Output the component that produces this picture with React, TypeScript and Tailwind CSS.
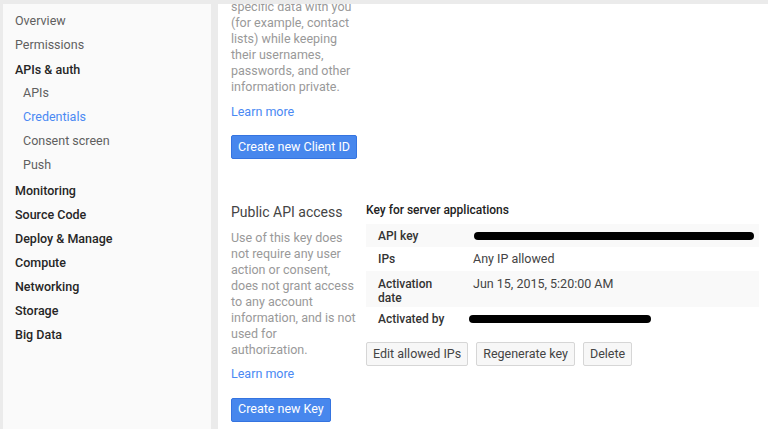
import React from "react";

type NavKind = "top" | "sub" | "group" | "active";

const navItems: { label: string; kind: NavKind; extra?: string }[] = [
  { label: "Overview", kind: "top" },
  { label: "Permissions", kind: "top" },
  { label: "APIs & auth", kind: "group", extra: "mt-[2px] h-[22px]" },
  { label: "APIs", kind: "sub" },
  { label: "Credentials", kind: "active" },
  { label: "Consent screen", kind: "sub" },
  { label: "Push", kind: "sub" },
  { label: "Monitoring", kind: "group", extra: "mt-[2px]" },
  { label: "Source Code", kind: "group" },
  { label: "Deploy & Manage", kind: "group" },
  { label: "Compute", kind: "group" },
  { label: "Networking", kind: "group" },
  { label: "Storage", kind: "group" },
  { label: "Big Data", kind: "group" },
];

const kindCls: Record<NavKind, string> = {
  top: "pl-[12px] text-[#5f5f5f]",
  group: "pl-[12px] text-[#262626] font-medium",
  sub: "pl-[20px] text-[#5f5f5f]",
  active: "pl-[20px] text-[#4a89f3]",
};

function Sidebar() {
  return (
    <aside className="w-[208px] shrink-0 bg-[#fafafa] mt-[4px] pt-[5px] ml-[3px]">
      {navItems.map((item) => (
        <div
          key={item.label}
          className={`flex items-center text-[12.5px] ${item.extra ?? "h-[24px]"} ${item.extra && !item.extra.includes("h-") ? "h-[24px]" : ""} ${kindCls[item.kind]}`}
        >
          {item.label}
        </div>
      ))}
    </aside>
  );
}

function Redacted({ width }: { width: number }) {
  return (
    <svg width={width} height="12" viewBox={`0 0 ${width} 12`} className="block">
      <rect x="1" y="2" width={width - 2} height="8" rx="4" fill="#000" />
    </svg>
  );
}

function KeyTable() {
  const labelCls = "w-[107px] shrink-0 pl-[12px] text-[12px] font-medium text-[#333] leading-[14px]";
  const valueCls = "text-[12.5px] text-[#444]";
  return (
    <div className="w-[393px]">
      <div className="text-[12px] font-medium text-[#222] leading-[16px]">Key for server applications</div>
      <div className="mt-[6px]">
        <div className="flex items-center h-[23px] bg-[#f9f9f9]">
          <div className={labelCls}>API key</div>
          <Redacted width={282} />
        </div>
        <div className="flex items-center h-[24px]">
          <div className={labelCls}>IPs</div>
          <div className={valueCls}>Any IP allowed</div>
        </div>
        <div className="flex items-start h-[36px] bg-[#f9f9f9] pt-[6px]">
          <div className={labelCls}>
            Activation
            <br />
            date
          </div>
          <div className={valueCls + " leading-[14px]"}>Jun 15, 2015, 5:20:00 AM</div>
        </div>
        <div className="flex items-center h-[24px]">
          <div className={labelCls}>Activated by</div>
          <div className="-ml-[5px]">
            <Redacted width={184} />
          </div>
        </div>
      </div>
      <div className="flex gap-[8px] mt-[11px]">
        {["Edit allowed IPs", "Regenerate key", "Delete"].map((b) => (
          <button
            key={b}
            className="h-[24px] px-[6px] rounded-[2px] border border-[#d6d6d6] bg-[#f7f7f7] text-[12.5px] text-[#444]"
          >
            {b}
          </button>
        ))}
      </div>
    </div>
  );
}

function BlueButton({ children }: { children: React.ReactNode }) {
  return (
    <button className="h-[24px] px-[6px] rounded-[2px] border border-[#3574e0] bg-[#4787ed] text-[12.5px] text-white">
      {children}
    </button>
  );
}

export default function App() {
  return (
    <div
      className="w-[768px] h-[429px] overflow-hidden bg-[#ebebeb] flex"
      style={{ fontFamily: "Roboto, 'Noto Sans', sans-serif" }}
    >
      <Sidebar />
      <main className="flex-1 bg-white ml-[7px] mt-[4px] overflow-hidden pl-[13px]">
        <div className="-mt-[5px] w-[125px]">
          <p className="text-[12.5px] leading-[16px] text-[#999]">
            specific data with you (for example, contact lists) while keeping their usernames, passwords, and other
            information private.
          </p>
          <div className="mt-[9px] text-[12.5px] leading-[16px] text-[#4a89f3]">Learn more</div>
          <div className="mt-[14px] w-[200px]">
            <BlueButton>Create new Client ID</BlueButton>
          </div>
        </div>
        <div className="flex gap-[10px] mt-[43px]">
          <div className="w-[125px] shrink-0">
            <div className="text-[14px] leading-[20px] text-[#444]">Public API access</div>
            <p className="mt-[8px] text-[12.5px] leading-[16px] text-[#999]">
              Use of this key does not require any user action or consent, does not grant access to any account
              information, and is not used for authorization.
            </p>
            <div className="mt-[8px] text-[12.5px] leading-[16px] text-[#4a89f3]">Learn more</div>
            <div className="mt-[14px] w-[200px]">
              <BlueButton>Create new Key</BlueButton>
            </div>
          </div>
          <KeyTable />
        </div>
      </main>
    </div>
  );
}
